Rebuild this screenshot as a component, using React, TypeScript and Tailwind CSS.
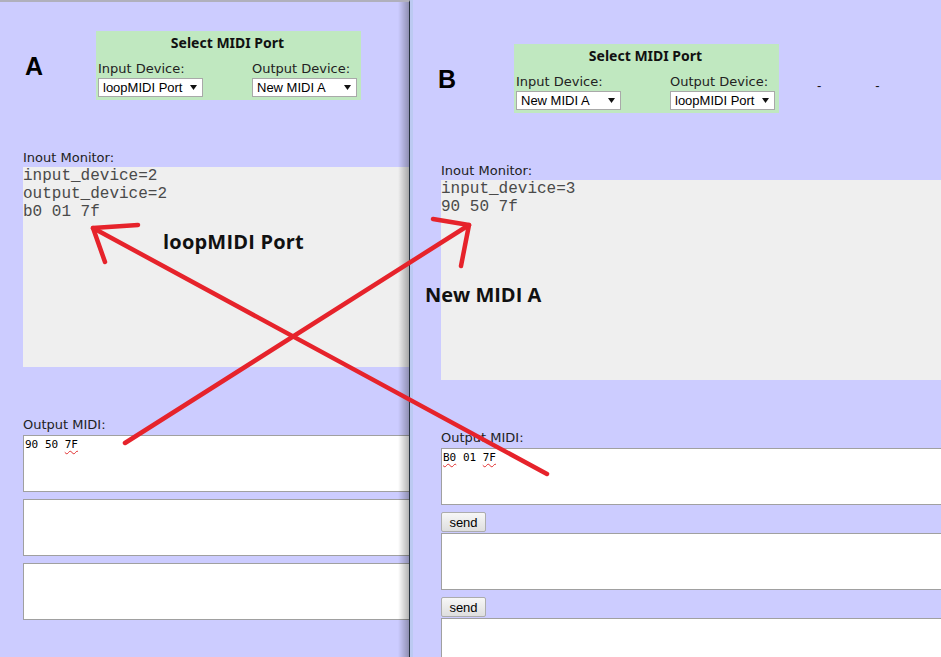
import React from 'react';

type Word = { text: string; typo?: boolean };

interface PanelProps {
  letter: string;
  pad: string;
  letterBox: string;
  inputDevice: string;
  outputDevice: string;
  monitor: string[];
  outputs: Word[][];
  withSend?: boolean;
  extra?: React.ReactNode;
}

const labelFont = "font-['DejaVu_Sans',Verdana,sans-serif] text-[13px] leading-[15px] text-[#222]";

const Select: React.FC<{ value: string }> = ({ value }) => (
  <div className="flex h-[19px] w-[105px] items-center justify-between border border-[#a9a9a9] bg-white pl-[4px] pr-[5px] font-['Liberation_Sans',Arial,sans-serif] text-[13px] leading-none text-black">
    <span>{value}</span>
    <svg width="7" height="5" viewBox="0 0 7 5">
      <polygon points="0,0 7,0 3.5,5" fill="#111" />
    </svg>
  </div>
);

const OutputBox: React.FC<{ words?: Word[] }> = ({ words = [] }) => (
  <div className="h-[57px] w-[600px] border border-[#a0a0a0] bg-white pl-[1px] pt-[2px] font-['DejaVu_Sans_Mono',monospace] text-[11px] leading-[13px] text-black">
    {words.map((w, i) => (
      <React.Fragment key={i}>
        {i > 0 && ' '}
        <span className={w.typo ? 'underline decoration-wavy decoration-[#e03030] decoration-1 underline-offset-2' : ''}>
          {w.text}
        </span>
      </React.Fragment>
    ))}
  </div>
);

const SendButton: React.FC = () => (
  <button className="mt-[7px] mb-[1px] block h-[20px] w-[45px] rounded-[2px] border border-[#acacac] bg-linear-to-b from-[#f7f7f7] to-[#dedede] font-['Liberation_Sans',Arial,sans-serif] text-[13px] leading-none text-black">
    send
  </button>
);

const Panel: React.FC<PanelProps> = ({ letter, pad, letterBox, inputDevice, outputDevice, monitor, outputs, withSend, extra }) => (
  <div className={pad}>
    {/* header: big letter + port selector */}
    <div className="flex items-start">
      <div className={`mt-[23px] font-['Liberation_Sans',Arial,sans-serif] text-[25px] font-bold leading-[25px] text-black ${letterBox}`}>
        {letter}
      </div>
      <div className="w-[265px] shrink-0 bg-[#c0e8c0] pt-[4px] pb-[3px] pl-[2px] pr-[4px]">
        <div className="h-[16px] text-center font-['Noto_Sans',sans-serif] text-[14px] font-bold leading-[16px] text-[#111]">
          Select MIDI Port
        </div>
        <div className={`mt-[10px] grid grid-cols-[154px_105px] ${labelFont}`}>
          <div>Input Device:</div>
          <div>Output Device:</div>
        </div>
        <div className="mt-[2px] grid grid-cols-[154px_105px]">
          <Select value={inputDevice} />
          <Select value={outputDevice} />
        </div>
      </div>
      {extra}
    </div>

    <div className={`mt-[50px] mb-[2px] ${labelFont}`}>Inout Monitor:</div>
    <pre className="h-[200px] w-[600px] bg-[#efefef] font-['Liberation_Mono','Courier_New',monospace] text-[16px] leading-[18px] text-[#4a4a4a]">
      {monitor.join('\n')}
    </pre>

    <div className={`mt-[50px] mb-[3px] ${labelFont}`}>Output MIDI:</div>
    {outputs.map((words, i) => (
      <div key={i} className={!withSend && i > 0 ? 'mt-[7px]' : ''}>
        {withSend && i > 0 && <SendButton />}
        <OutputBox words={words} />
      </div>
    ))}
  </div>
);

export default function App() {
  return (
    <div className="relative flex h-[657px] w-full overflow-hidden bg-[#ccccff]">
      {/* window A */}
      <div className="relative h-[657px] w-[410px] shrink-0 overflow-hidden border-t-2 border-r border-t-[#b0b0bc] border-r-[#27323f]">
        <Panel
          letter="A"
          pad="pl-[23px] pt-[29px]"
          letterBox="ml-[2px] w-[71px]"
          inputDevice="loopMIDI Port"
          outputDevice="New MIDI A"
          monitor={['input_device=2', 'output_device=2', 'b0 01 7f']}
          outputs={[
            [{ text: '90' }, { text: '50' }, { text: '7F', typo: true }],
            [],
            [],
          ]}
        />
        <div className="pointer-events-none absolute top-0 right-0 h-full w-[11px] bg-linear-to-r from-transparent to-black/30" />
      </div>

      {/* window B */}
      <div className="h-[657px] flex-1 overflow-hidden border-l-[3px] border-l-[#bccaf2]">
        <Panel
          letter="B"
          pad="pl-[28px] pt-[44px]"
          letterBox="ml-[-3px] w-[76px]"
          inputDevice="New MIDI A"
          outputDevice="loopMIDI Port"
          monitor={['input_device=3', '90 50 7f']}
          outputs={[
            [{ text: 'B0', typo: true }, { text: '01' }, { text: '7F', typo: true }],
            [],
            [],
          ]}
          withSend
          extra={
            <div className="ml-[38px] mt-[35px] flex gap-[54px] font-['Liberation_Sans',Arial,sans-serif] text-[13px] leading-[13px] text-[#111]">
              <span>-</span>
              <span>-</span>
            </div>
          }
        />
      </div>

      {/* annotations drawn over both windows */}
      <div className="pointer-events-none absolute left-[163px] top-[232px] font-['Open_Sans',sans-serif] text-[20px] font-bold leading-[20px] tracking-[0.2px] text-[#111]">
        loopMIDI Port
      </div>
      <div className="pointer-events-none absolute left-[425px] top-[285px] font-['Open_Sans',sans-serif] text-[20px] font-bold leading-[20px] text-[#111]">
        New MIDI A
      </div>
      <svg className="pointer-events-none absolute inset-0" width="941" height="657" viewBox="0 0 941 657">
        <g fill="none" stroke="#e6232b" strokeWidth="4.5" strokeLinecap="round" strokeLinejoin="round">
          <path d="M125 443 L469 225" />
          <path d="M433 219 L469 225 L461 266" />
          <path d="M547 474 L93 228" />
          <path d="M138 225 L93 228 L105 262" />
        </g>
      </svg>
    </div>
  );
}
